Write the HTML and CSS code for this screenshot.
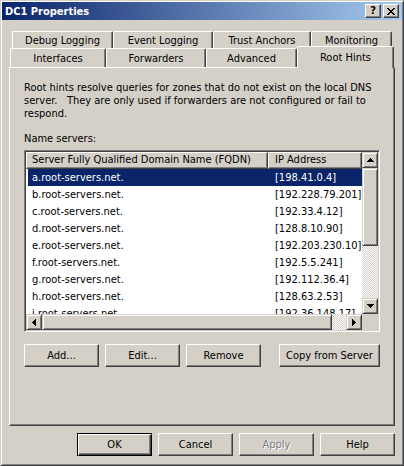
FILE: index.html
```html
<!DOCTYPE html>
<html>
<head>
<meta charset="utf-8">
<link rel="stylesheet" href="styles.css">
</head>
<body>
<div class="window">
  <div class="titlebar">
    <span class="title">DC1 Properties</span>
    <div class="caps">
      <span class="cap help">?</span>
      <span class="cap close"><svg width="8" height="7" viewBox="0 0 8 7" shape-rendering="crispEdges"><path d="M0 0h2v1h1v1h2v-1h1v-1h2v1h-1v1h-1v1h-1v1h1v1h1v1h1v1h-2v-1h-1v-1h-2v1h-1v1h-2v-1h1v-1h1v-1h1v-1h-1v-1h-1v-1h-1z" fill="#000"/></svg></span>
    </div>
  </div>
  <div class="dialog">
    <div class="tabs">
      <div class="tabrow back">
        <div class="tab t101">Debug Logging</div>
        <div class="tab t100">Event Logging</div>
        <div class="tab t98">Trust Anchors</div>
        <div class="tab t81">Monitoring</div>
      </div>
      <div class="tabrow front">
        <div class="tab t96">Interfaces</div>
        <div class="tab t100">Forwarders</div>
        <div class="tab t91">Advanced</div>
        <div class="tab t97 selected">Root Hints</div>
      </div>
    </div>
    <div class="panel">
      <p class="desc">Root hints resolve queries for zones that do not exist on the local DNS<br>server.&nbsp;&nbsp; They are only used if forwarders are not configured or fail to<br>respond.</p>
      <div class="label">Name servers:</div>
      <div class="listbox">
        <div class="listview">
          <div class="header">
            <div class="hcell c1">Server Fully Qualified Domain Name (FQDN)</div>
            <div class="hcell c2">IP Address</div>
          </div>
          <div class="rows">
            <div class="row sel"><span class="c1">a.root-servers.net.</span><span class="c2">[198.41.0.4]</span></div>
            <div class="row"><span class="c1">b.root-servers.net.</span><span class="c2">[192.228.79.201]</span></div>
            <div class="row"><span class="c1">c.root-servers.net.</span><span class="c2">[192.33.4.12]</span></div>
            <div class="row"><span class="c1">d.root-servers.net.</span><span class="c2">[128.8.10.90]</span></div>
            <div class="row"><span class="c1">e.root-servers.net.</span><span class="c2">[192.203.230.10]</span></div>
            <div class="row"><span class="c1">f.root-servers.net.</span><span class="c2">[192.5.5.241]</span></div>
            <div class="row"><span class="c1">g.root-servers.net.</span><span class="c2">[192.112.36.4]</span></div>
            <div class="row"><span class="c1">h.root-servers.net.</span><span class="c2">[128.63.2.53]</span></div>
            <div class="row"><span class="c1">i.root-servers.net.</span><span class="c2">[192.36.148.17]</span></div>
          </div>
        </div>
        <div class="vscroll">
          <div class="sbtn"><svg width="7" height="4" viewBox="0 0 7 4" shape-rendering="crispEdges"><path d="M3 0h1v1h1v1h1v1h1v1h-7v-1h1v-1h1v-1h1z" fill="#000"/></svg></div>
          <div class="thumb vthumb"></div>
          <div class="track"></div>
          <div class="sbtn"><svg width="7" height="4" viewBox="0 0 7 4" shape-rendering="crispEdges"><path d="M0 0h7v1h-1v1h-1v1h-1v1h-1v-1h-1v-1h-1v-1h-1z" fill="#000"/></svg></div>
        </div>
        <div class="hscroll">
          <div class="sbtn"><svg width="4" height="7" viewBox="0 0 4 7" shape-rendering="crispEdges"><path d="M3 0h1v7h-1v-1h-1v-1h-1v-1h-1v-1h1v-1h1v-1h1z" fill="#000"/></svg></div>
          <div class="thumb hthumb"></div>
          <div class="track"></div>
          <div class="sbtn"><svg width="4" height="7" viewBox="0 0 4 7" shape-rendering="crispEdges"><path d="M0 0h1v1h1v1h1v1h1v1h-1v1h-1v1h-1v1h-1z" fill="#000"/></svg></div>
        </div>
        <div class="corner"></div>
      </div>
      <div class="btnrow">
        <button class="btn">Add...</button>
        <button class="btn">Edit...</button>
        <button class="btn">Remove</button>
        <button class="btn wide">Copy from Server</button>
      </div>
    </div>
    <div class="footer">
      <button class="btn default">OK</button>
      <button class="btn">Cancel</button>
      <button class="btn disabled">Apply</button>
      <button class="btn">Help</button>
    </div>
  </div>
</div>
</body>
</html>
```
FILE: styles.css
```css
* { box-sizing: border-box; }
html, body { margin: 0; padding: 0; background: #d4d0c8; }
body {
  font-family: "DejaVu Sans Condensed", "Liberation Sans", sans-serif;
  font-size: 11px;
  color: #000;
}
.window {
  width: 404px;
  height: 466px;
  background: #d4d0c8;
  border: 1px solid;
  border-color: #d4d0c8 #404040 #404040 #d4d0c8;
  box-shadow: inset 1px 1px #fff, inset -1px -1px #808080;
  padding: 1px;
  display: flex;
  flex-direction: column;
}
.titlebar {
  height: 18px;
  flex: none;
  background: linear-gradient(to right, #0a246a, #a6caf0);
  display: flex;
  align-items: center;
  justify-content: space-between;
  padding: 0 3px 0 3px;
}
.title { color: #fff; font-weight: bold; font-size: 11px; }
.caps { display: flex; gap: 2px; }
.cap {
  width: 16px;
  height: 14px;
  background: #d4d0c8;
  border: 1px solid;
  border-color: #fff #404040 #404040 #fff;
  box-shadow: inset -1px -1px #808080;
  display: flex;
  align-items: center;
  justify-content: center;
  font-weight: bold;
  font-size: 11px;
  line-height: 12px;
}
.cap svg { display: block; }
.dialog { flex: 1; padding: 11px 0 0 7px; }
.tabs { display: flex; flex-direction: column; }
.tabrow { display: flex; }
.tabrow.back { height: 17px; margin-left: 3px; }
.tabrow.front { height: 19px; margin-left: 1px; }
.tab {
  background: #d4d0c8;
  border-top: 1px solid #fff;
  border-left: 1px solid #fff;
  border-right: 1px solid #404040;
  box-shadow: inset -1px 0 #808080;
  border-radius: 2px 2px 0 0;
  text-align: center;
  line-height: 13px;
  white-space: nowrap;
}
.back .tab { height: 17px; padding-top: 2px; }
.front .tab { height: 19px; padding-top: 3px; }
.front .tab.selected {
  height: 22px;
  margin-top: -2px;
  padding-top: 4px;
  position: relative;
  z-index: 1;
}
.t101 { width: 101px; }
.t100 { width: 100px; }
.t98 { width: 98px; }
.t81 { width: 81px; }
.t96 { width: 96px; }
.t91 { width: 91px; }
.t97 { width: 97px; }
.panel {
  width: 386px;
  height: 359px;
  border: 1px solid;
  border-color: #fff #404040 #404040 #fff;
  box-shadow: inset -1px -1px #808080;
  padding: 13px 14px 0 14px;
}
.desc { margin: 0; line-height: 13px; white-space: nowrap; }
.label { margin-top: 12px; line-height: 13px; }
.listbox {
  margin-top: 5px;
  width: 356px;
  height: 182px;
  border: 1px solid;
  border-color: #808080 #fff #fff #808080;
  box-shadow: inset 1px 1px #404040, inset -1px -1px #d4d0c8;
  padding: 1px;
  display: grid;
  grid-template-columns: 336px 16px;
  grid-template-rows: 162px 16px;
  background: #fff;
}
.listview { overflow: hidden; background: #fff; }
.header { display: flex; height: 17px; }
.hcell {
  height: 17px;
  background: #d4d0c8;
  border-top: 1px solid #fff;
  border-left: 1px solid #fff;
  border-right: 1px solid #404040;
  border-bottom: 1px solid #404040;
  box-shadow: inset -1px -1px #808080;
  line-height: 14px;
  white-space: nowrap;
  overflow: hidden;
}
.hcell.c1 { width: 242px; padding-left: 5px; }
.hcell.c2 { width: 94px; padding-left: 6px; }
.row {
  display: flex;
  height: 17px;
  line-height: 17px;
  margin-left: 2px;
  white-space: nowrap;
}
.row .c1 { width: 240px; padding-left: 4px; }
.row .c2 { padding-left: 7px; }
.row.sel { background: #0a246a; color: #fff; }
.vscroll { display: flex; flex-direction: column; }
.hscroll { display: flex; }
.sbtn {
  width: 16px;
  height: 16px;
  flex: none;
  background: #d4d0c8;
  border: 1px solid;
  border-color: #d4d0c8 #404040 #404040 #d4d0c8;
  box-shadow: inset 1px 1px #fff, inset -1px -1px #808080;
  display: flex;
  align-items: center;
  justify-content: center;
}
.sbtn svg { display: block; }
.thumb {
  flex: none;
  background: #d4d0c8;
  border: 1px solid;
  border-color: #d4d0c8 #404040 #404040 #d4d0c8;
  box-shadow: inset 1px 1px #fff, inset -1px -1px #808080;
}
.vthumb { height: 78px; width: 16px; }
.hthumb { width: 290px; height: 16px; }
.track {
  flex: 1;
  background-color: #fff;
  background-image: conic-gradient(#d4d0c8 25%, #fff 0 50%, #d4d0c8 0 75%, #fff 0);
  background-size: 2px 2px;
}
.corner { background: #d4d0c8; }
.btnrow { display: flex; gap: 6px; margin-top: 12px; }
.btn {
  width: 75px;
  height: 23px;
  padding: 0;
  margin: 0;
  background: #d4d0c8;
  border: 1px solid;
  border-color: #fff #404040 #404040 #fff;
  border-radius: 0;
  box-shadow: inset -1px -1px #808080;
  font-family: inherit;
  font-size: 11px;
  font-weight: normal;
  color: #000;
  text-align: center;
  line-height: 19px;
}
.btn.wide { width: 101px; margin-left: auto; }
.btn.default {
  border-color: #000;
  box-shadow: inset 1px 1px #fff, inset -1px -1px #404040, inset -2px -2px #808080;
}
.btn.disabled { color: #808080; text-shadow: 1px 1px #fff; }
.footer {
  display: flex;
  justify-content: flex-end;
  gap: 6px;
  margin-top: 7px;
  width: 386px;
}
```
